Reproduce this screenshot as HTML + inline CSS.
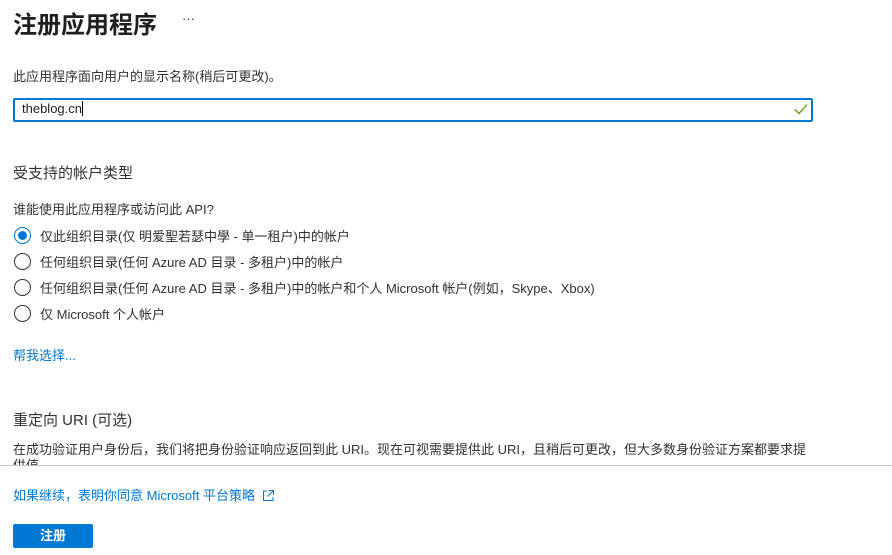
<!DOCTYPE html>
<html><head><meta charset="utf-8"><style>
*{margin:0;padding:0;box-sizing:border-box}
body{width:892px;height:555px;overflow:hidden;background:#fff;font-family:"Liberation Sans","Noto Sans CJK SC",sans-serif;color:#323130;position:relative}
.a{position:absolute;white-space:nowrap}
.f13{font-size:13px}
.radio{position:absolute;left:14px;width:17px;height:17px;border:1px solid #323130;border-radius:50%}
.radio.on{border-color:#0078d4}
.radio.on::after{content:"";position:absolute;left:3px;top:3px;width:9px;height:9px;border-radius:50%;background:#0078d4}
</style></head><body>
<div class="a" style="left:13px;top:5px;font-size:24px;font-weight:bold;color:#201f1e">注册应用程序</div>
<div class="a" style="left:182px;top:11px;font-size:13px">···</div>
<div class="a f13" style="left:13px;top:66px">此应用程序面向用户的显示名称(稍后可更改)。</div>
<div class="a" style="left:13px;top:98px;width:800px;height:24px;border:2px solid #0078d4;border-radius:2px"></div>
<div class="a f13" style="left:22px;top:101px;color:#201f1e">theblog.cn<span style="display:inline-block;width:1px;height:15px;background:#000;vertical-align:-3px"></span></div>
<svg class="a" style="left:794px;top:103px" width="14" height="12" viewBox="0 0 14 12"><path d="M1 6.5L5 10.5L13 1.5" fill="none" stroke="#57a300" stroke-width="1.3"/></svg>
<div class="a" style="left:13px;top:162px;font-size:15px">受支持的帐户类型</div>
<div class="a f13" style="left:13px;top:199px">谁能使用此应用程序或访问此 API?</div>
<div class="radio on" style="top:227px"></div><div class="a f13" style="left:40px;top:226px">仅此组织目录(仅 明爱聖若瑟中學 - 单一租户)中的帐户</div>
<div class="radio" style="top:253px"></div><div class="a f13" style="left:40px;top:252px">任何组织目录(任何 Azure AD 目录 - 多租户)中的帐户</div>
<div class="radio" style="top:279px"></div><div class="a f13" style="left:40px;top:278px">任何组织目录(任何 Azure AD 目录 - 多租户)中的帐户和个人 Microsoft 帐户(例如，Skype、Xbox)</div>
<div class="radio" style="top:305px"></div><div class="a f13" style="left:40px;top:304px">仅 Microsoft 个人帐户</div>
<div class="a f13" style="left:13px;top:345px;color:#0078d4">帮我选择...</div>
<div class="a" style="left:13px;top:409px;font-size:15px">重定向 URI (可选)</div>
<div class="a f13" style="left:13px;top:439px">在成功验证用户身份后，我们将把身份验证响应返回到此 URI。现在可视需要提供此 URI，且稍后可更改，但大多数身份验证方案都要求提</div>
<div class="a" style="left:0;top:456px;width:892px;height:9px;overflow:hidden"><div class="f13" style="padding-left:13px;margin-top:-1px">供值</div></div>
<div class="a" style="left:0;top:465px;width:892px;height:90px;background:#fff;border-top:1px solid #c8c6c4"></div>
<div class="a f13" style="left:13px;top:485px;color:#0078d4">如果继续，表明你同意 Microsoft 平台策略</div>
<svg class="a" style="left:262px;top:489px" width="13" height="13" viewBox="0 0 13 13"><path d="M5 2H1.5V11.5H11V8M7 1.5H11.5V6M11.5 1.5L5.5 7.5" fill="none" stroke="#0078d4" stroke-width="1"/></svg>
<div class="a" style="left:13px;top:524px;width:80px;height:24px;background:#0078d4;border-radius:2px;color:#fff;font-size:13px;font-weight:bold;text-align:center;line-height:24px">注册</div>
</body></html>
